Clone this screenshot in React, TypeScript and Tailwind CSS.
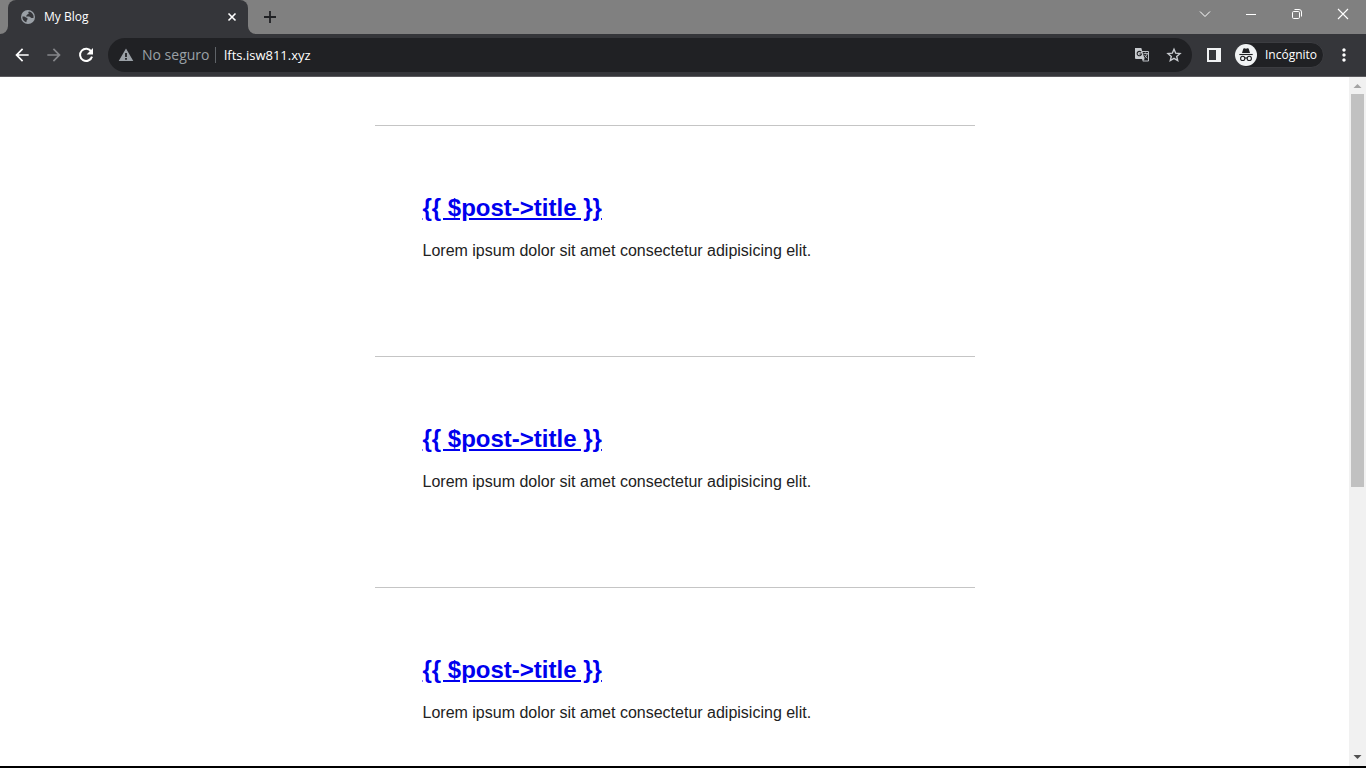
import type { ReactNode } from "react";
import { MdArrowBack, MdArrowForward, MdMoreVert } from "react-icons/md";

const posts = [1, 2, 3].map((id) => ({
  id,
  title: "{{ $post->title }}",
  excerpt: "Lorem ipsum dolor sit amet consectetur adipisicing elit.",
}));

function IconButton({
  label,
  className = "",
  children,
}: {
  label: string;
  className?: string;
  children: ReactNode;
}) {
  return (
    <button
      type="button"
      aria-label={label}
      className={`flex shrink-0 items-center justify-center ${className}`}
    >
      {children}
    </button>
  );
}

function TabCorner({ flip = false }: { flip?: boolean }) {
  return (
    <svg
      viewBox="0 0 8 8"
      className={`size-2 shrink-0 self-end fill-[#35363a] ${flip ? "-scale-x-100" : ""}`}
      aria-hidden="true"
    >
      <path d="M8 0v8H0a8 8 0 0 0 8-8z" />
    </svg>
  );
}

function GlobeIcon() {
  return (
    <svg viewBox="0 0 16 16" className="size-4 shrink-0" aria-hidden="true">
      <circle cx="8" cy="8" r="7" fill="#9aa0a6" />
      <path
        d="M9.2 2.6c-1 .2-1.2 1-.7 1.5.6.5.1 1.1-.7 1.1-.9.1-.8.9-1.300 1.200-.7.4-.4 1.200.4 1.200h2.200c.9 0 1.200.8 1.800 1.200.7.400 1.900.300 2.700-.1a5.600 5.600 0 0 0-4.400-6.100z"
        fill="#35363a"
      />
      <path
        d="M2.400 7.600c1.500-.3 2.900.1 3.700 1 .5.600 1.500.500 1.500 1.300 0 .7-.9.800-.9 1.500 0 .8-.2 1.500-.6 1.900a5.600 5.600 0 0 1-3.700-5.700z"
        fill="#35363a"
      />
    </svg>
  );
}

function TabStrip() {
  return (
    <header className="flex h-[34px] shrink-0 items-stretch bg-[#808080]">
      <TabCorner />
      <div className="flex w-60 items-center rounded-t-lg bg-[#35363a] pr-2 pl-3 text-white">
        <GlobeIcon />
        <span className="ml-2 flex-1 text-xs">My Blog</span>
        <IconButton label="Cerrar pestaña" className="size-4">
          <svg viewBox="0 0 16 16" className="size-4 fill-none stroke-white" strokeWidth="1.6">
            <path d="M4.500 4.500l7 7M11.500 4.500l-7 7" />
          </svg>
        </IconButton>
      </div>
      <TabCorner flip />
      <IconButton label="Nueva pestaña" className="w-7">
        <svg viewBox="0 0 14 14" className="size-3.5 fill-none stroke-[#202124]" strokeWidth="1.8">
          <path d="M7 1v12M1 7h12" />
        </svg>
      </IconButton>
      <div className="ml-auto flex h-7">
        <IconButton label="Buscar pestañas" className="w-[46px]">
          <svg viewBox="0 0 12 12" className="size-3 fill-none stroke-white">
            <path d="M1 3.500l5 5 5-5" />
          </svg>
        </IconButton>
        <IconButton label="Minimizar" className="w-[46px]">
          <svg viewBox="0 0 12 12" className="size-3 fill-none stroke-white">
            <path d="M1 6.500h10" />
          </svg>
        </IconButton>
        <IconButton label="Restaurar" className="w-[46px]">
          <svg viewBox="0 0 12 12" className="size-3 fill-none stroke-white">
            <rect x="1.500" y="3.500" width="7" height="7" rx="1.200" />
            <path d="M3.500 1.500H8a2.500 2.500 0 0 1 2.500 2.500v4.500" />
          </svg>
        </IconButton>
        <IconButton label="Cerrar" className="w-[46px]">
          <svg viewBox="0 0 12 12" className="size-3 fill-none stroke-white" strokeWidth="1.1">
            <path d="M1 1l10 10M11 1L1 11" />
          </svg>
        </IconButton>
      </div>
    </header>
  );
}

function ReloadIcon() {
  return (
    <svg viewBox="0 0 16 16" className="size-4" aria-hidden="true">
      <path
        d="M13.300 4.600A6.100 6.100 0 1 0 14 9.600"
        fill="none"
        stroke="currentColor"
        strokeWidth="2"
      />
      <path d="M15 1v6.400H8.600z" fill="currentColor" />
    </svg>
  );
}

function WarningIcon() {
  return (
    <svg viewBox="0 0 16 16" className="size-4 shrink-0" aria-hidden="true">
      <path
        d="M8 1.500L15.300 14H.7zM7.100 6v4h1.800V6zM7.100 11v1.700h1.800V11z"
        fill="#9aa0a6"
        fillRule="evenodd"
      />
    </svg>
  );
}

function TranslateIcon() {
  return (
    <svg viewBox="0 0 16 16" className="size-4 shrink-0" aria-hidden="true">
      <path d="M7 4.500h7.500v9.500H9" fill="none" stroke="#bdc1c6" />
      <path d="M1 1h6.300l3.300 11H2a1 1 0 0 1-1-1z" fill="#c8cbcf" />
      <path d="M10.600 12L8.800 14.500 8 12z" fill="#bdc1c6" />
      <path
        d="M7.100 5.200A2.200 2.200 0 1 0 7.500 7H5.400"
        fill="none"
        stroke="#202124"
        strokeWidth="1.1"
      />
      <path
        d="M9.500 6.600h4.500M11.500 5.600v1M13.200 6.600c-.3 1.700-1.300 3-2.700 4M10.600 8c.6 1.300 1.400 2.200 2.700 3.200"
        fill="none"
        stroke="#bdc1c6"
        strokeWidth=".9"
      />
    </svg>
  );
}

function StarIcon() {
  return (
    <svg viewBox="0 0 16 16" className="size-4 shrink-0" aria-hidden="true">
      <path
        d="M8 2.200l1.700 4 4.300.4-3.300 2.800 1 4.200L8 11.400l-3.700 2.200 1-4.200L2 6.600l4.300-.4z"
        fill="none"
        stroke="#c8cbcf"
        strokeWidth="1.400"
      />
    </svg>
  );
}

function IncognitoIcon() {
  return (
    <svg viewBox="0 0 22 22" className="size-[22px] shrink-0" aria-hidden="true">
      <circle cx="11" cy="11" r="11" fill="#f1f3f4" />
      <path d="M7 9l1.300-4.200c.2-.5.6-.7 1.100-.5l1.600.4 1.600-.4c.5-.2.9 0 1.100.5L15 9z" fill="#202124" />
      <path d="M4.300 10.500h13.400" stroke="#202124" strokeWidth="1.100" />
      <g fill="none" stroke="#202124" strokeWidth="1.100">
        <circle cx="7.700" cy="14.400" r="2.100" />
        <circle cx="14.300" cy="14.400" r="2.100" />
        <path d="M9.800 14.200q1.200-.7 2.400 0" />
      </g>
    </svg>
  );
}

function Toolbar() {
  return (
    <nav
      aria-label="Navegación"
      className="flex h-[43px] shrink-0 items-center border-b border-[#5b5a5e] bg-[#35363a] pr-3 pl-1.5 text-white"
    >
      <IconButton label="Atrás" className="size-8">
        <MdArrowBack className="size-5 stroke-current" />
      </IconButton>
      <IconButton label="Adelante" className="size-8 text-[#85868a]">
        <MdArrowForward className="size-5 stroke-current" />
      </IconButton>
      <IconButton label="Recargar" className="size-8">
        <ReloadIcon />
      </IconButton>
      <div className="ml-1.5 flex h-[34px] flex-1 items-center rounded-full bg-[#202124] px-2.5 text-sm">
        <WarningIcon />
        <span className="ml-2 w-[65px] shrink-0 whitespace-nowrap text-[#9aa0a6]">No seguro</span>
        <span className="mx-2 h-4 w-px shrink-0 bg-[#5f6368]" />
        <input
          aria-label="Dirección"
          defaultValue="lfts.isw811.xyz"
          className="min-w-0 flex-1 bg-transparent text-[13px] text-white outline-none"
        />
        <IconButton label="Traducir esta página" className="size-4">
          <TranslateIcon />
        </IconButton>
        <IconButton label="Añadir a marcadores" className="ml-4 size-4">
          <StarIcon />
        </IconButton>
      </div>
      <IconButton label="Panel lateral" className="ml-3.5 size-4">
        <svg viewBox="0 0 16 16" className="size-4">
          <path d="M1 1h14v14H1zM3 3v10h7V3z" fill="#f1f3f4" fillRule="evenodd" />
        </svg>
      </IconButton>
      <button
        type="button"
        className="ml-3 flex h-[26px] w-[90px] shrink-0 items-center gap-2 rounded-full border border-[#3c3d41] bg-[#202124] text-xs"
      >
        <IncognitoIcon />
        Incógnito
      </button>
      <IconButton label="Más opciones" className="ml-2.5 size-5">
        <MdMoreVert className="size-5" />
      </IconButton>
    </nav>
  );
}

function Scrollbar() {
  return (
    <div className="flex w-[17px] shrink-0 flex-col bg-[#f1f1f1]" aria-hidden="true">
      <svg viewBox="0 0 17 17" className="size-[17px] shrink-0">
        <path d="M4.500 11h8l-4-4z" fill="#a3a3a3" />
      </svg>
      <div className="min-h-0 flex-1">
        <div className="mx-auto h-[60%] w-[13px] bg-[#c1c1c1]" />
      </div>
      <svg viewBox="0 0 17 17" className="size-[17px] shrink-0">
        <path d="M4.500 6h8l-4 4z" fill="#505050" />
      </svg>
    </div>
  );
}

export default function App() {
  return (
    <div className="flex h-screen flex-col overflow-hidden border-b-2 border-black bg-white font-['Open_Sans',sans-serif]">
      <TabStrip />
      <Toolbar />
      <div className="flex min-h-0 flex-1">
        <main className="min-w-0 flex-1 overflow-hidden pt-12 font-['Liberation_Sans',Arial,sans-serif] text-[#222222]">
          <div className="mx-auto max-w-[600px]">
            {posts.map((post) => (
              <article
                key={post.id}
                className="h-[231px] border-t border-[#c5c5c5] px-12 pt-16"
              >
                <h1 className="text-2xl leading-9 font-bold">
                  <a href="#post" className="text-[#0000ee] underline">
                    {post.title}
                  </a>
                </h1>
                <p className="mt-3 text-base leading-[26px]">{post.excerpt}</p>
              </article>
            ))}
          </div>
        </main>
        <Scrollbar />
      </div>
    </div>
  );
}
